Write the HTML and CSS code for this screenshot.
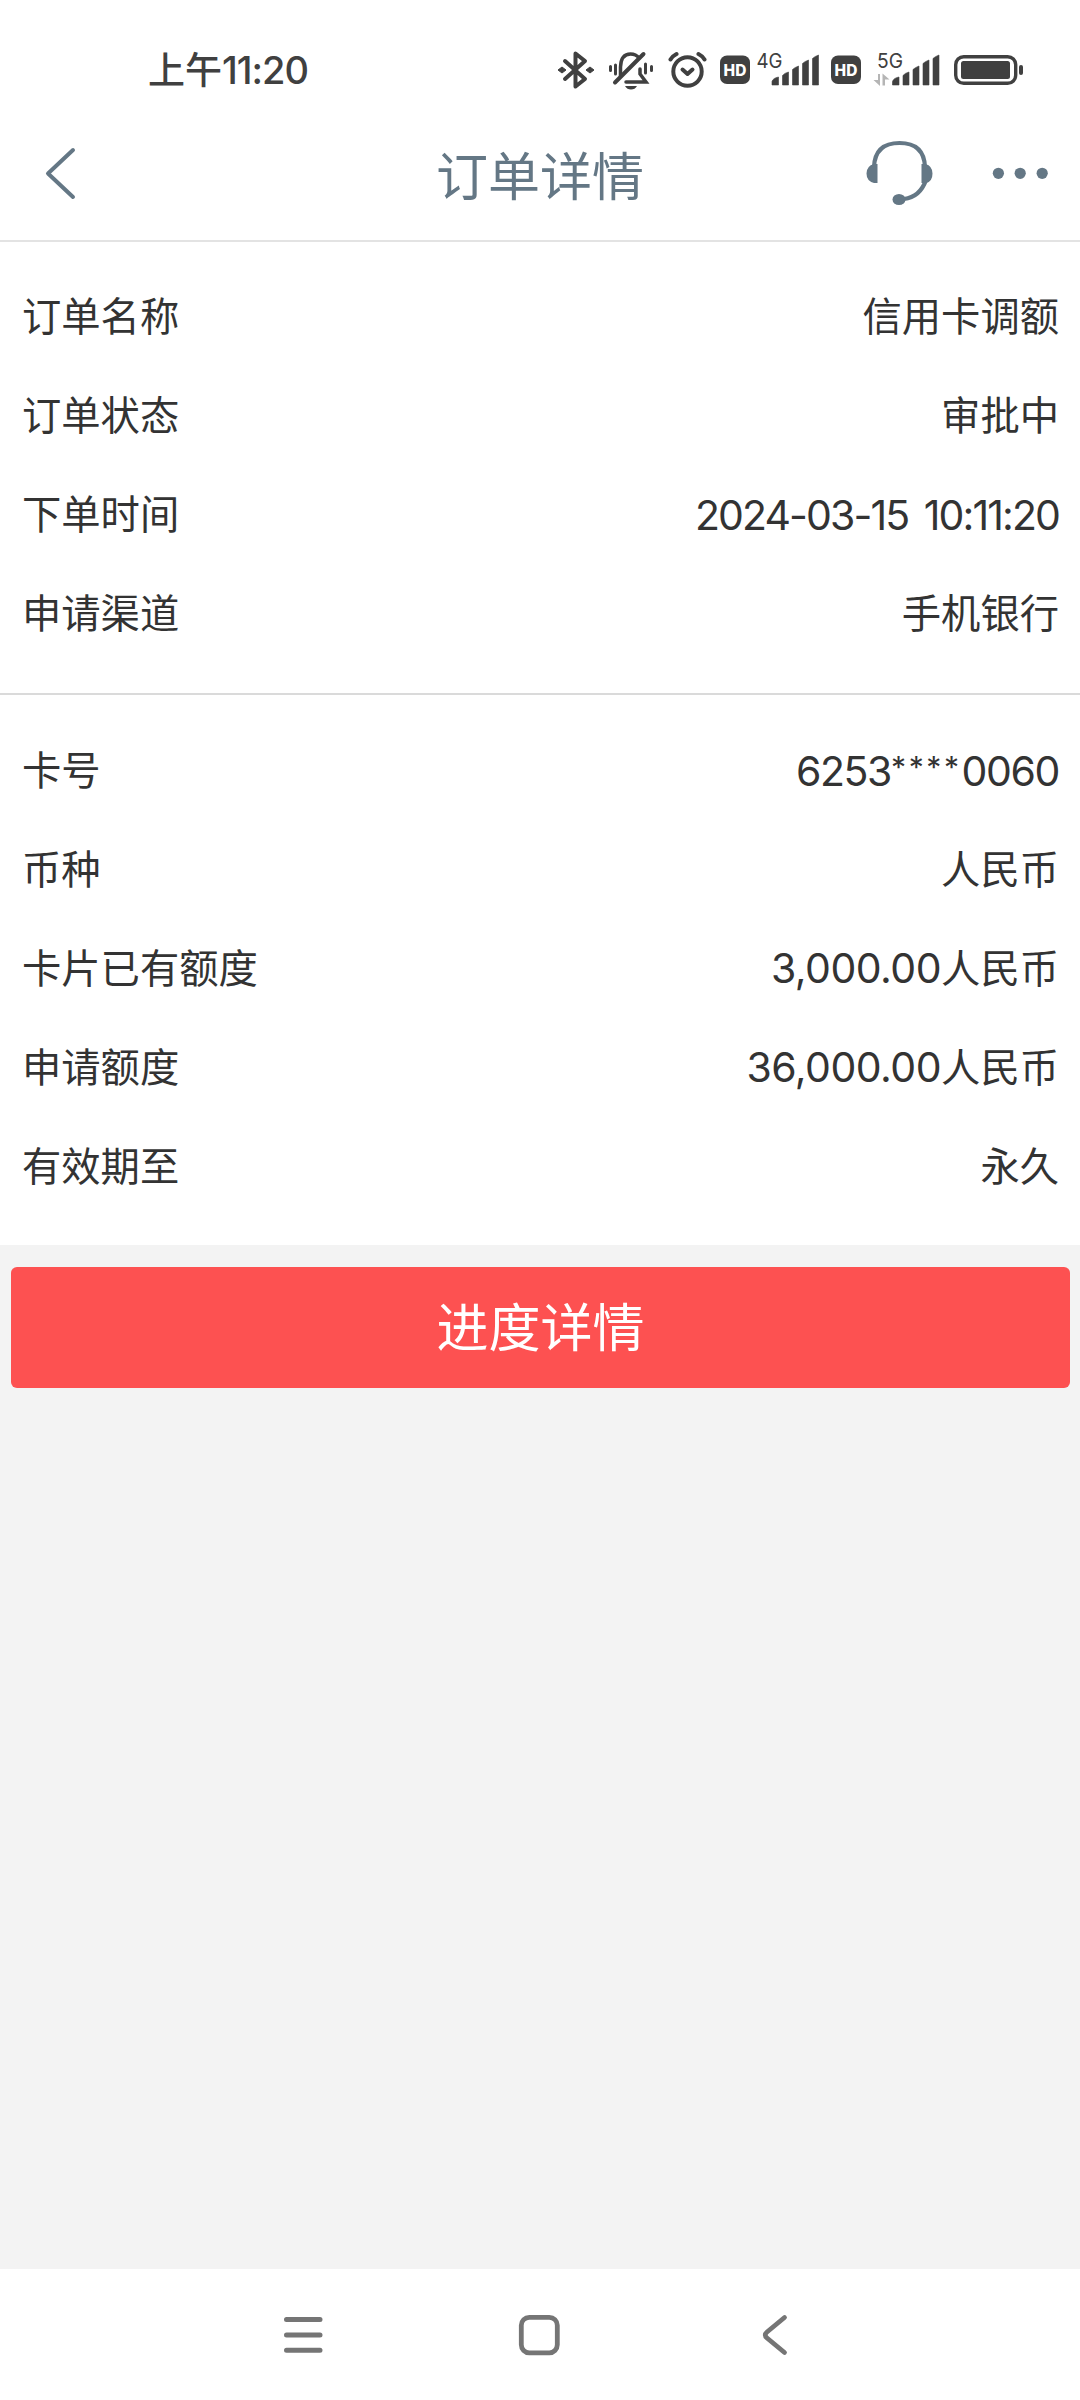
FILE: index.html
```html
<!DOCTYPE html>
<html lang="zh-CN">
<head>
<meta charset="utf-8">
<title>订单详情</title>
<link rel="stylesheet" href="styles.css">
</head>
<body>
<div class="status-bar">
  <div class="clock">上午<span class="clock-digits">11:20</span></div>
  <div class="status-icons">
    <svg class="bluetooth" width="38" height="44" viewBox="557 48 38 44"><path d="M565 61 585 79 575.5 86.500V53.500L585 61 565 79" fill="none" stroke="#404040" stroke-width="4" stroke-linejoin="round" stroke-linecap="round"/><path d="M558 70l4-3 4 3-4 3zM586 70l4-3 4 3-4 3z" fill="#404040" stroke="#404040" stroke-linejoin="round"/></svg>
    <svg class="mute" width="46" height="44" viewBox="608 48 46 44"><g fill="none" stroke="#404040" stroke-width="3.500" stroke-linecap="round"><path d="M620.500 76V67Q621 54 630.500 54Q636 54 639 58M640 69V74L646 82H626"/><path d="M643.500 54 615 82.500" stroke-width="4"/><path d="M615.500 65v9M645.500 64v9" stroke-width="3"/><path d="M610.500 66.500v4M651.500 66.500v4" stroke-width="3"/></g><path d="M625 86h12q-2 3.500-6 3.500t-6-3.500z" fill="#404040"/></svg>
    <svg class="alarm" width="40" height="44" viewBox="668 48 40 44"><g fill="none" stroke="#404040" stroke-width="4" stroke-linecap="round" stroke-linejoin="round"><circle cx="687.500" cy="71.500" r="14.200"/><path d="M682.500 69.500l5 4.500 5-4.500"/><path d="M670.500 59.500q2-3.500 6-5.500M698.500 54q4 2 6 5.500"/></g></svg>
    <svg class="hd" width="30" height="44" viewBox="720 48 30 44"><rect x="720" y="55.500" width="30" height="28.500" rx="7" fill="#404040"/><text x="735" y="75.800" text-anchor="middle" class="hd-text">HD</text></svg>
    <svg class="signal" width="64" height="44" viewBox="756 48 64 44"><text x="756.500" y="68" class="net-text" textLength="26" lengthAdjust="spacingAndGlyphs">4G</text><path d="M772 85v-3.500q1-3.500 6.500-4.500v8zM782.500 85V75.500q2-2.500 6-3.500v13zM792.500 85V69.500q2-2 6-3.500v19zM802.500 85V63.500q2-2 6-3.500v25zM812.500 85V58.500q2-2 6-3.500v30z" class="bars"/></svg>
    <svg class="hd" width="30" height="44" viewBox="720 48 30 44"><rect x="720" y="55.500" width="30" height="28.500" rx="7" fill="#404040"/><text x="735" y="75.800" text-anchor="middle" class="hd-text">HD</text></svg>
    <svg class="signal signal-5g" width="68" height="44" viewBox="873 48 68 44"><text x="877" y="68" class="net-text" textLength="26" lengthAdjust="spacingAndGlyphs">5G</text><path d="M880 74h-2v6h-4.500l6.500 6zM882.500 85.500V73.500l7 6h-4.500v6z" fill="#b5b5b5"/><path d="M892.500 85v-3.500q1-3.500 6.500-4.500v8zM903 85V75.500q2-2.500 6-3.500v13zM913 85V69.500q2-2 6-3.500v19zM923 85V63.500q2-2 6-3.500v25zM933 85V58.500q2-2 6-3.500v30z" class="bars"/></svg>
    <svg class="battery" width="70" height="44" viewBox="954 48 70 44"><rect x="955.700" y="56.700" width="60" height="26.600" rx="8" fill="none" stroke="#404040" stroke-width="3.400"/><rect x="961" y="61" width="49" height="18" rx="2.500" fill="#404040"/><rect x="1019" y="65" width="4" height="10" rx="2" fill="#404040"/></svg>
  </div>
</div>

<header class="nav">
  <svg class="back" width="34" height="56" viewBox="44 145 34 56"><path d="M73 150 48 173.500 73 197" fill="none" stroke="#647785" stroke-width="4" stroke-linecap="round" stroke-linejoin="round"/></svg>
  <h1 class="title">订单详情</h1>
  <svg class="service" width="70" height="68" viewBox="864 139 70 68"><path d="M874 167Q875 143 899.500 143T925 167M926 180Q920 197 904 199" fill="none" stroke="#647785" stroke-width="4.200"/><path d="M877.500 164v19h-3.500q-7.500-2-7.500-9.500t7.500-9.500zM921.500 164h4q7 2 7 9.500t-6 9.500h-5z" fill="#647785"/><ellipse cx="899" cy="199.500" rx="6.500" ry="5.500" fill="#647785"/></svg>
  <svg class="more" width="58" height="20" viewBox="991 163 58 20" fill="#647785"><circle cx="998.400" cy="173.300" r="5.600"/><circle cx="1020.200" cy="173.300" r="5.600"/><circle cx="1042.200" cy="173.300" r="5.600"/></svg>
</header>

<main class="content">
  <section class="group">
    <div class="row"><span>订单名称</span><span>信用卡调额</span></div>
    <div class="row"><span>订单状态</span><span>审批中</span></div>
    <div class="row"><span>下单时间</span><span class="num date">2024-03-15 10:11:20</span></div>
    <div class="row"><span>申请渠道</span><span>手机银行</span></div>
  </section>
  <section class="group">
    <div class="row"><span>卡号</span><span class="num card">6253<span class="mask">****</span>0060</span></div>
    <div class="row"><span>币种</span><span>人民币</span></div>
    <div class="row"><span>卡片已有额度</span><span><span class="num">3,000.00</span>人民币</span></div>
    <div class="row"><span>申请额度</span><span><span class="num">36,000.00</span>人民币</span></div>
    <div class="row"><span>有效期至</span><span>永久</span></div>
  </section>
  <button class="progress">进度详情</button>
</main>

<footer class="system-nav">
  <svg width="40" height="44" viewBox="283 2313 40 44"><path d="M286.500 2319.500H320M286.500 2335H320M286.500 2350.300H320" stroke="#757575" stroke-width="5" stroke-linecap="round"/></svg>
  <svg width="44" height="44" viewBox="517 2313 44 44"><rect x="521.300" y="2317.300" width="36" height="35.500" rx="8" fill="none" stroke="#757575" stroke-width="4.800"/></svg>
  <svg class="nav-back" width="30" height="44" viewBox="760 2313 30 44"><path d="M784.500 2317.500 767 2332Q763.500 2335 767 2338L784.500 2352.500" fill="none" stroke="#757575" stroke-width="4.800" stroke-linecap="round"/></svg>
</footer>
</body>
</html>
```
FILE: styles.css
```css
* { box-sizing: border-box; }

body {
  margin: 0;
  height: 2400px;
  display: flex;
  flex-direction: column;
  background: #fff;
  color: #333;
  font-family: Inter, "Noto Sans CJK SC", sans-serif;
}

svg { display: block; flex: none; }

.status-bar {
  height: 106px;
  padding: 34px 56px 0 148px;
  display: flex;
  justify-content: space-between;
  color: #404040;
}

.clock {
  height: 72px;
  line-height: 72px;
  font-size: 37px;
  font-weight: 500;
  white-space: nowrap;
}

.clock-digits { font-size: 38px; letter-spacing: -1px; }

.status-icons {
  height: 44px;
  margin-top: 14px;
  display: flex;
}

.mute { margin-left: 13px; }
.alarm { margin-left: 14px; }
.hd { margin-left: 12px; }
.signal { margin-left: 6px; }
.signal + .hd { margin-left: 11px; }
.signal-5g { margin-left: 12px; }
.battery { margin-left: 13px; }

.hd-text { font-size: 15.5px; font-weight: 800; fill: #fff; }
.net-text { font-size: 20.5px; fill: #404040; }
.bars { fill: #404040; stroke: #404040; stroke-width: 0.6px; stroke-linejoin: round; }

.nav {
  height: 136px;
  padding: 0 31px 0 44px;
  display: grid;
  grid-template-columns: 392px 1fr 70px 58px;
  align-items: center;
  border-bottom: 2px solid #e3e3e3;
}

.title {
  margin: 9px 0 0;
  color: #647785;
  font-size: 52px;
  font-weight: 400;
  line-height: 72px;
}

.service { margin-left: -57px; }

.content {
  flex: 1;
  background: #f3f3f3;
}

.group {
  padding: 25px 21px 30px 22px;
  background: #fff;
}

.group + .group {
  padding: 26px 21px 29px 22px;
  border-top: 2px solid #dadada;
}

.row {
  height: 99px;
  display: flex;
  justify-content: space-between;
  align-items: center;
  font-size: 39.3px;
  line-height: 60px;
  white-space: nowrap;
}

.num { font-size: 41px; letter-spacing: -0.5px; }
.date { letter-spacing: -1.9px; word-spacing: 6px; }
.card { letter-spacing: -1.4px; }

.mask {
  font-size: 30px;
  line-height: 0;
  letter-spacing: 2.6px;
  vertical-align: 8px;
}

.progress {
  display: block;
  width: 1059px;
  height: 121px;
  margin: 22px auto 0 11px;
  padding: 2px 0 0;
  border: 0;
  border-radius: 6px;
  background: #fd5151;
  color: #fff;
  font: 400 52px/119px Inter, "Noto Sans CJK SC", sans-serif;
}

.system-nav {
  height: 131px;
  padding: 0 290px 0 283px;
  display: flex;
  align-items: center;
  gap: 194px;
}

.nav-back { margin-left: 5px; }
```
